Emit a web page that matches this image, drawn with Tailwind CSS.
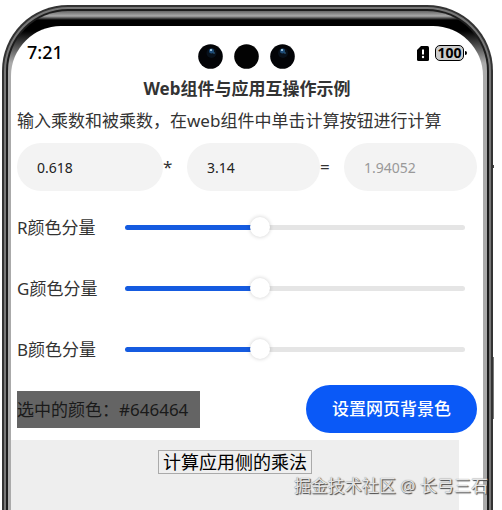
<!DOCTYPE html>
<html lang="zh-CN">
<head>
  <meta charset="UTF-8">
  <meta name="viewport" content="width=device-width, initial-scale=1.0">
  <title>Web组件与应用互操作示例</title>
  <script src="https://cdn.jsdelivr.net/npm/@tailwindcss/browser@4"></script>
</head>
<body class="relative flex min-h-screen bg-white pt-[5px] pr-[9px] pl-0.5 font-['Noto_Sans','Noto_Sans_CJK_SC',sans-serif] text-[#333]">

<!-- phone frame -->
<div class="flex min-w-0 flex-1 rounded-t-[66px] bg-[#333] px-0.5 pt-0.5">
<div class="flex min-w-0 flex-1 rounded-t-[64px] bg-[#777] px-0.5 pt-0.5">
<div class="flex min-w-0 flex-1 rounded-t-[62px] bg-[#1c1c1c] px-0.5 pt-0.5">
<div class="flex min-w-0 flex-1 rounded-t-[60px] bg-[linear-gradient(to_bottom,#666_0,#aaa_5px,#555_7px,#000_9px,#000_20px,#aaa_52px)] pt-[15px] pr-1 pl-[3px]">

  <main class="flex min-w-0 flex-1 flex-col rounded-t-[50px] bg-white">
    <header class="grid h-[50px] grid-cols-3 items-start px-4">
      <span class="pt-3 text-lg leading-7 font-medium text-black">7:21</span>
      <div class="flex justify-center gap-[11px] pt-[18px]">
        <svg class="size-[25px] shrink-0" viewBox="0 0 25 25">
          <circle cx="12.5" cy="12.5" r="12.3" fill="#030407"/>
          <circle cx="13.5" cy="9" r="5" fill="#08111b"/>
          <circle cx="13.5" cy="7" r="2.5" fill="#1d4c78"/>
          <circle cx="13" cy="6" r="1" fill="#b8def5"/>
          <circle cx="16" cy="9" r="0.8" fill="#356d98"/>
        </svg>
        <svg class="size-[25px] shrink-0" viewBox="0 0 25 25">
          <circle cx="12.5" cy="12.5" r="12.3" fill="#030303"/>
        </svg>
        <svg class="size-[25px] shrink-0" viewBox="0 0 25 25">
          <circle cx="12.5" cy="12.5" r="12.3" fill="#030407"/>
          <circle cx="13" cy="9" r="5" fill="#08111b"/>
          <circle cx="12.5" cy="7" r="2.5" fill="#1d4c78"/>
          <circle cx="12" cy="6" r="1" fill="#b8def5"/>
          <circle cx="15" cy="9" r="0.8" fill="#356d98"/>
        </svg>
      </div>
      <div class="flex items-center justify-end gap-1.5 pt-[19px]">
        <svg class="h-[15px] w-3" viewBox="0 0 12 15">
          <path d="M4 0h6.5Q12 0 12 1.5v12q0 1.5-1.5 1.5h-9Q0 15 0 13.5V4z" fill="#000"/>
          <path d="M6 3.5v5" stroke="#fff" stroke-width="2"/>
          <circle cx="6" cy="11" r="1.2" fill="#fff"/>
        </svg>
        <div class="flex items-center gap-px">
          <span class="flex h-4 w-[29px] items-center justify-center rounded-[5px] border border-black bg-[#ccc] text-sm leading-none font-bold text-black">100</span>
          <i class="h-1 w-0.5 rounded-r bg-black"></i>
        </div>
      </div>
    </header>

    <div class="px-1.5">
      <h1 class="text-center text-[17px] leading-[26px] font-bold">Web组件与应用互操作示例</h1>
      <p class="mt-1.5 text-[17px] leading-[26px] whitespace-nowrap">输入乘数和被乘数，在web组件中单击计算按钮进行计算</p>

      <div class="mt-[9px] grid h-12 grid-cols-[146fr_24px_133fr_24px_133fr] items-center text-[17px]">
        <input id="a" aria-label="乘数" value="0.618" class="h-full w-full min-w-0 rounded-full bg-[#f3f3f3] px-5 text-sm text-[#222]">
        <span>*</span>
        <input id="b" aria-label="被乘数" value="3.14" class="h-full w-full min-w-0 rounded-full bg-[#f3f3f3] px-5 text-sm text-[#222]">
        <span>=</span>
        <input id="result" aria-label="结果" placeholder="1.94052" class="h-full w-full min-w-0 rounded-full bg-[#f3f3f3] px-5 text-sm placeholder:text-[#999]">
      </div>

      <div class="mt-1.5 text-[17px]">
        <div class="flex h-[61px] items-center pr-3">
          <label for="r" class="w-27 shrink-0">R颜色分量</label>
          <input type="range" id="r" min="0" max="255" value="100" style="--fill: 39.2%" class="h-5 min-w-0 flex-1 appearance-none bg-transparent [&::-webkit-slider-runnable-track]:h-[5px] [&::-webkit-slider-runnable-track]:rounded-full [&::-webkit-slider-runnable-track]:bg-[linear-gradient(to_right,#155be0_var(--fill),#e5e5e5_var(--fill))] [&::-webkit-slider-thumb]:-mt-2 [&::-webkit-slider-thumb]:size-5 [&::-webkit-slider-thumb]:appearance-none [&::-webkit-slider-thumb]:rounded-full [&::-webkit-slider-thumb]:bg-white [&::-webkit-slider-thumb]:shadow-[0_0_4px_rgba(0,0,0,0.2)]">
        </div>
        <div class="flex h-[61px] items-center pr-3">
          <label for="g" class="w-27 shrink-0">G颜色分量</label>
          <input type="range" id="g" min="0" max="255" value="100" style="--fill: 39.2%" class="h-5 min-w-0 flex-1 appearance-none bg-transparent [&::-webkit-slider-runnable-track]:h-[5px] [&::-webkit-slider-runnable-track]:rounded-full [&::-webkit-slider-runnable-track]:bg-[linear-gradient(to_right,#155be0_var(--fill),#e5e5e5_var(--fill))] [&::-webkit-slider-thumb]:-mt-2 [&::-webkit-slider-thumb]:size-5 [&::-webkit-slider-thumb]:appearance-none [&::-webkit-slider-thumb]:rounded-full [&::-webkit-slider-thumb]:bg-white [&::-webkit-slider-thumb]:shadow-[0_0_4px_rgba(0,0,0,0.2)]">
        </div>
        <div class="flex h-[61px] items-center pr-3">
          <label for="bl" class="w-27 shrink-0">B颜色分量</label>
          <input type="range" id="bl" min="0" max="255" value="100" style="--fill: 39.2%" class="h-5 min-w-0 flex-1 appearance-none bg-transparent [&::-webkit-slider-runnable-track]:h-[5px] [&::-webkit-slider-runnable-track]:rounded-full [&::-webkit-slider-runnable-track]:bg-[linear-gradient(to_right,#155be0_var(--fill),#e5e5e5_var(--fill))] [&::-webkit-slider-thumb]:-mt-2 [&::-webkit-slider-thumb]:size-5 [&::-webkit-slider-thumb]:appearance-none [&::-webkit-slider-thumb]:rounded-full [&::-webkit-slider-thumb]:bg-white [&::-webkit-slider-thumb]:shadow-[0_0_4px_rgba(0,0,0,0.2)]">
        </div>
      </div>

      <div class="mt-[5px] flex items-center justify-between text-[17px]">
        <output id="color" class="w-[183px] bg-[#646464] leading-[37px] whitespace-nowrap text-[#1a1a1a]">选中的颜色：#646464</output>
        <button type="button" id="setBg" class="h-12 rounded-full bg-[#0a59f7] px-[26px] font-medium whitespace-nowrap text-white">设置网页背景色</button>
      </div>
    </div>

    <!-- embedded web view -->
    <section id="web" class="mt-[7px] mr-6 flex flex-1 items-start justify-center bg-[#eee] pt-2.5">
      <button type="button" id="calc" class="border border-[#aaa] bg-[#efefef] px-1 text-lg leading-[22px] text-black">计算应用侧的乘法</button>
    </section>
  </main>

</div>
</div>
</div>
</div>

<!-- side keys -->
<i class="absolute top-[165px] right-2 h-[3px] w-px bg-[#444]"></i>
<i class="absolute top-[357px] right-2 h-[62px] w-px bg-[#777]"></i>

<p class="absolute right-3.5 bottom-3 text-[17px] leading-6 whitespace-nowrap text-[#e5e5e5] [text-shadow:1px_1px_1px_#444,0_0_1px_#777]">掘金技术社区 @ 长弓三石</p>

<script>
  const sliders = ["r", "g", "bl"].map(id => document.getElementById(id));
  const color = document.getElementById("color");

  sliders.forEach(slider => {
    slider.addEventListener("input", () => {
      slider.style.setProperty("--fill", slider.value / 2.55 + "%");
      const hex = "#" + sliders.map(s => Number(s.value).toString(16).padStart(2, "0")).join("");
      color.textContent = "选中的颜色：" + hex;
      color.style.backgroundColor = hex;
    });
  });

  document.getElementById("setBg").addEventListener("click", () => {
    document.getElementById("web").style.backgroundColor = getComputedStyle(color).backgroundColor;
  });

  document.getElementById("calc").addEventListener("click", () => {
    const product = document.getElementById("a").value * document.getElementById("b").value;
    document.getElementById("result").value = product.toFixed(5);
  });
</script>

</body>
</html>
